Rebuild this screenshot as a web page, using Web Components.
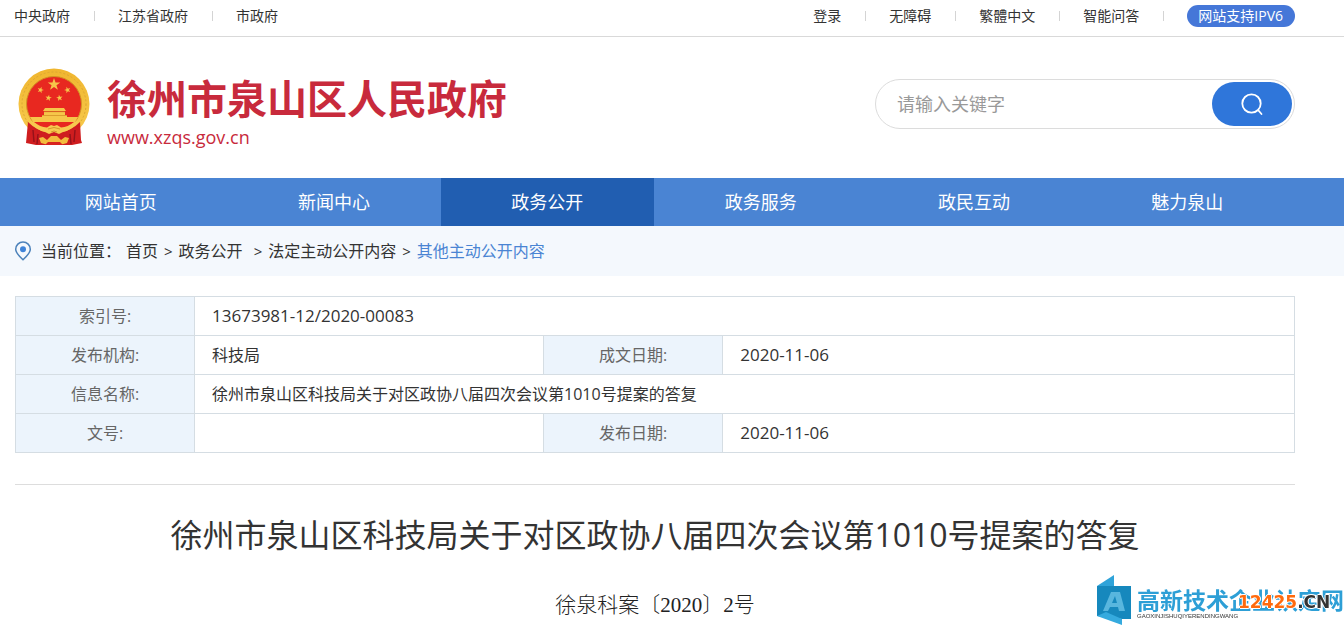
<!DOCTYPE html>
<html lang="zh-CN">
<head>
<meta charset="utf-8">
<meta name="viewport" content="width=device-width, initial-scale=1">
<title>徐州市泉山区人民政府</title>
<style>
  :root {
    --edge-left: 15px;
    --edge-right: 49px;
    --blue: #4a84d3;
    --red: #c82a3c;
    --line: #d5dde3;
  }
  body {
    margin: 0;
    background: #fff;
    color: #333;
    font: 16px/24px "Open Sans", "Noto Sans CJK SC", sans-serif;
  }
</style>
</head>
<body>
<gov-page></gov-page>

<script>
const define = (name, html) => {
  const template = document.createElement('template');
  template.innerHTML = html;
  customElements.define(name, class extends HTMLElement {
    constructor() {
      super();
      this.attachShadow({ mode: 'open' }).append(template.content.cloneNode(true));
    }
  });
};

define('top-link', `
  <style>
    :host { display: flex; align-items: center; }
    :host::after { content: ""; width: 1px; height: 10px; margin: 0 23px 0 24px; background: #d4d4d4; }
    :host([last])::after { display: none; }
    a { color: #333; text-decoration: none; white-space: nowrap; }
  </style>
  <a href="#"><slot></slot></a>`);

define('top-bar', `
  <style>
    :host { display: block; border-bottom: 1px solid #d9d9d9; font-size: 14px; line-height: 20px; }
    div { display: flex; justify-content: space-between; align-items: center; height: 32px;
          padding: 0 var(--edge-right) 4px 14px; }
    nav { display: flex; align-items: center; }
    .pill { display: block; padding: 0 12px 0 11px; line-height: 22px; border-radius: 11px; background: #4577d8;
            color: #fff; text-decoration: none; white-space: nowrap; }
  </style>
  <div>
    <nav aria-label="上级政府">
      <top-link>中央政府</top-link><top-link>江苏省政府</top-link><top-link last>市政府</top-link>
    </nav>
    <nav aria-label="工具">
      <top-link>登录</top-link><top-link>无障碍</top-link><top-link>繁體中文</top-link><top-link>智能问答</top-link>
      <a class="pill" href="#">网站支持IPV6</a>
    </nav>
  </div>`);

define('national-emblem', `
  <style>:host { display: block; } svg { display: block; }</style>
  <svg width="72" height="78" viewBox="0 0 72 78" aria-hidden="true">
    <defs>
      <linearGradient id="gold" x1="0" y1="0" x2="0" y2="1">
        <stop offset="0" stop-color="#f0b62f"/><stop offset="1" stop-color="#f8cc50"/>
      </linearGradient>
      <path id="star" d="M0-10 2.3-3.1 9.5-3.1 3.7 1.2 5.9 8.1 0 3.8-5.9 8.1-3.7 1.2-9.5-3.1-2.3-3.1Z"/>
    </defs>
    <circle cx="36" cy="36" r="35.500" fill="url(#gold)"/>
    <circle cx="36" cy="36" r="32" fill="none" stroke="#dda733" stroke-width="1" stroke-dasharray="2 2"/>
    <circle cx="36" cy="36" r="27.500" fill="#e82820" stroke="#d29424" stroke-width="1"/>
    <g fill="#f6c64a">
      <use href="#star" transform="translate(36 16.500) scale(.66)"/>
      <use href="#star" transform="translate(22.500 22) scale(.34) rotate(18)"/>
      <use href="#star" transform="translate(49.500 22) scale(.34) rotate(-18)"/>
      <use href="#star" transform="translate(30.500 30) scale(.34) rotate(10)"/>
      <use href="#star" transform="translate(41.500 30) scale(.34) rotate(-10)"/>
      <path d="M27 40H46L48 43H25ZM26 44H47V47.500H26ZM24 47H49V49H60L57 54H15L12 49H24Z"/>
    </g>
    <path d="M26 43.700H47M24 47.500H49" stroke="#d08b22" stroke-width=".7"/>
    <path d="M10 54Q18 62 28 64L44 64Q54 62 62 54L63 72 64 75 54 77H18L8 75Z" fill="#cf1d1f"/>
    <path d="M15 62 16 74M20 66 19 76M57 62 56 74M52 66 53 76" stroke="#94121a" stroke-width="1.400" fill="none"/>
    <path d="M15 54H57Q51 59 44 60L40 57H32L28 60Q21 59 15 54Z" fill="#e82820"/>
    <path d="M11 53 16 54Q22 59 29 59.500L33 57 36 58 39 57 43 59.500Q50 59 56 54L61 53Q54 62 45 64L41 66 36 64 31 66 27 64Q18 62 11 53Z" fill="#f7ca50"/>
    <path d="M30 61Q36 58 42 61M33 64Q36 62 39 64" stroke="#cc8a25" stroke-width=".8" fill="none"/>
    <path d="M21 70 25 69 29 72 33 68H39L43 72 47 69 51 70 49 75 42 77 36 75 30 77 23 75Z" fill="#f3bc3e"/>
    <path d="M27 77 30 74H42L45 77Z" fill="#d8231f"/>
  </svg>`);

define('search-box', `
  <style>
    :host { display: block; width: 420px; }
    form { box-sizing: border-box; display: flex; height: 50px; padding: 2px; border: 1px solid #dcdcdc; border-radius: 25px; }
    input { flex: 1; min-width: 0; border: 0; padding: 0 0 0 19px; outline: none; background: none; color: #333;
            font: inherit; font-size: 18px; }
    input::placeholder { color: #999; opacity: 1; }
    button { flex: none; width: 80px; height: 44px; padding: 0; border: 0; border-radius: 22px; background: #2f76da;
             display: grid; place-items: center; }
    svg { display: block; }
  </style>
  <form role="search">
    <input type="text" placeholder="请输入关键字" aria-label="请输入关键字">
    <button type="button" aria-label="搜索">
      <svg width="24" height="24" viewBox="0 0 24 24" fill="none" stroke="#fff" stroke-width="1.800" stroke-linecap="round">
        <circle cx="11.500" cy="11.500" r="9.200"/><path d="M18.500 18.500 21.500 22"/>
      </svg>
    </button>
  </form>`);

define('site-header', `
  <style>
    :host { display: flex; justify-content: space-between; align-items: flex-start;
            padding: 31px var(--edge-right) 27px 18px; }
    .brand { display: flex; gap: 17px; text-decoration: none; color: var(--red); }
    .name { display: block; padding-top: 7px; font-size: 40px; line-height: 48px; font-weight: 700; white-space: nowrap; }
    .url { display: block; font-size: 18px; line-height: 28px; }
    search-box { margin-top: 11px; }
  </style>
  <a class="brand" href="#">
    <national-emblem></national-emblem>
    <span><span class="name">徐州市泉山区人民政府</span><span class="url">www.xzqs.gov.cn</span></span>
  </a>
  <search-box></search-box>`);

define('nav-item', `
  <style>
    :host { display: block; flex: 1; }
    a { display: block; text-align: center; line-height: 48px; color: #fff; text-decoration: none; }
    :host([active]) a { background: #215eb1; }
  </style>
  <a href="#"><slot></slot></a>`);

define('main-nav', `
  <style>
    :host { display: block; background: var(--blue); font-size: 18px; }
    nav { display: flex; padding: 0 50px 0 14px; }
  </style>
  <nav aria-label="主导航">
    <nav-item>网站首页</nav-item><nav-item>新闻中心</nav-item><nav-item active>政务公开</nav-item>
    <nav-item>政务服务</nav-item><nav-item>政民互动</nav-item><nav-item>魅力泉山</nav-item>
  </nav>`);

define('crumb-trail', `
  <style>
    :host { display: block; background: #f4f8fd; }
    nav { display: flex; align-items: center; height: 50px; padding: 0 var(--edge-right) 0 14px; white-space: nowrap; }
    svg { margin-right: 9px; }
    .label { margin-right: 5px; }
    a { color: #333; text-decoration: none; }
    i { font-style: normal; font-size: 15px; margin: 0 6px; }
    .wide { margin-left: 11px; }
    a[aria-current] { color: #4a84d3; }
  </style>
  <nav aria-label="当前位置">
    <svg width="18" height="20" viewBox="0 0 18 20" aria-hidden="true">
      <path d="M9 1A7.300 7.300 0 0 1 16.300 8.300C16.300 12 12 16 9 18.800 6 16 1.700 12 1.700 8.300A7.300 7.300 0 0 1 9 1Z" fill="none" stroke="#4c82ba" stroke-width="1.500"/>
      <circle cx="9" cy="8.200" r="3" fill="#3f83d8"/>
    </svg>
    <span class="label">当前位置：</span>
    <a href="#">首页</a><i>&gt;</i><a href="#">政务公开</a><i class="wide">&gt;</i><a href="#">法定主动公开内容</a><i>&gt;</i><a href="#" aria-current="page">其他主动公开内容</a>
  </nav>`);

define('info-table', `
  <style>
    :host { display: block; padding-bottom: 31px; border-bottom: 1px solid #ddd; }
    table { width: 100%; border-collapse: collapse; table-layout: fixed; }
    .key { width: 14%; } .mid { width: 27.300%; }
    th, td { height: 38px; padding: 0; border: 1px solid var(--line); line-height: 24px; }
    th { background: #ecf4fc; color: #666; font-weight: 400; text-align: center; }
    td { padding-left: 17px; text-align: left; }
    .num { font-size: 17px; }
  </style>
  <table>
    <colgroup><col class="key"><col class="mid"><col class="key"><col></colgroup>
    <tbody>
      <tr><th scope="row">索引号:</th><td class="num" colspan="3">13673981-12/2020-00083</td></tr>
      <tr><th scope="row">发布机构:</th><td>科技局</td><th scope="row">成文日期:</th><td class="num">2020-11-06</td></tr>
      <tr><th scope="row">信息名称:</th><td colspan="3">徐州市泉山区科技局关于对区政协八届四次会议第1010号提案的答复</td></tr>
      <tr><th scope="row">文号:</th><td></td><th scope="row">发布日期:</th><td class="num">2020-11-06</td></tr>
    </tbody>
  </table>`);

define('article-head', `
  <style>
    :host { display: block; text-align: center; }
    h1 { margin: 26px 0 0; font-size: 32px; line-height: 48px; font-weight: 400; }
    p { margin: 31px 0 0; font: 300 21px/30px "Liberation Serif", "Noto Sans CJK SC", serif; color: #222; }
  </style>
  <h1><slot name="title"></slot></h1>
  <p><slot name="number"></slot></p>`);

define('site-mark', `
  <style>
    :host { position: fixed; right: 0; bottom: 0; display: flex; gap: 5px; width: 247px; height: 50px; white-space: nowrap; }
    svg { flex: none; display: block; }
    .name { display: block; padding-top: 10px; font: 700 23px/28px "Noto Sans CJK SC", sans-serif; color: #2d9fd6; }
    .latin { display: block; font: 6px/6px "Liberation Sans", sans-serif; color: #333; }
    .domain { position: absolute; left: 141px; top: 15px; font: 700 17px/24px "DejaVu Sans", sans-serif; color: #333;
              text-shadow: 1px 0 #fff, -1px 0 #fff, 0 1px #fff, 0 -1px #fff; }
    b { font-weight: inherit; color: #ff6a0d; }
  </style>
  <svg width="35" height="50" viewBox="0 0 35 50" aria-hidden="true">
    <path d="M0 11 17 0V11Z" fill="#2fa3d9"/>
    <path d="M0 11H34V44H25L0 41Z" fill="#1688bd"/>
    <path d="M0 41 9 37 25 44V50Z" fill="#35aade"/>
    <path fill-rule="evenodd" d="M6 36 14 17H23L28 36H22L21 32H13L11 36ZM15 28H20L18 21Z" fill="#58b6de"/>
  </svg>
  <span><span class="name">高新技术企业认定网</span><span class="latin">GAOXINJISHUQIYERENDINGWANG</span></span>
  <span class="domain"><b>12425</b>.CN</span>`);

define('gov-page', `
  <style>
    :host { display: block; }
    main { padding: 20px var(--edge-right) 0 var(--edge-left); }
  </style>
  <top-bar></top-bar>
  <site-header></site-header>
  <main-nav></main-nav>
  <crumb-trail></crumb-trail>
  <main>
    <info-table></info-table>
    <article-head>
      <span slot="title">徐州市泉山区科技局关于对区政协八届四次会议第1010号提案的答复</span>
      <span slot="number">徐泉科案〔2020〕2号</span>
    </article-head>
  </main>
  <site-mark></site-mark>`);
</script>
</body>
</html>
